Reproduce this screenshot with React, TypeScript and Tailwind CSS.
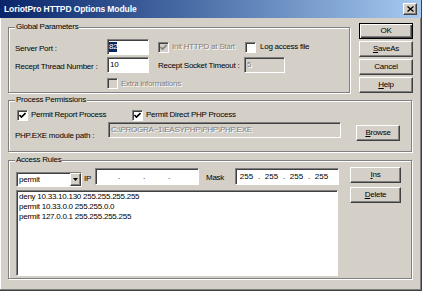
import React from "react";

const sunken =
  "border border-t-[#808080] border-l-[#808080] border-r-white border-b-white shadow-[inset_1px_1px_0_#404040]";
const raised =
  "border border-t-white border-l-white border-r-[#404040] border-b-[#404040] shadow-[inset_-1px_-1px_0_#808080]";
const etched = "relative border border-[#808080] shadow-[inset_1px_1px_0_#fff,1px_1px_0_#fff]";
const grayText = "text-[#808080] [text-shadow:1px_1px_0_#fff]";

function Check({ checked, disabled }: { checked?: boolean; disabled?: boolean }) {
  return (
    <span
      className={`w-[11px] h-[11px] shrink-0 flex items-center justify-center ${sunken} ${
        disabled ? "bg-[#d4d0c8]" : "bg-white"
      }`}
    >
      {checked && (
        <svg width="7" height="7" viewBox="0 0 7 7">
          <path d="M0.5 3 L2.5 5 L6.5 1" stroke={disabled ? "#808080" : "#000"} strokeWidth="1.6" fill="none" />
        </svg>
      )}
    </span>
  );
}

function Button({ label, u, w, def }: { label: string; u?: number; w: string; def?: boolean }) {
  const text =
    u === undefined ? (
      label
    ) : (
      <>
        {label.slice(0, u)}
        <span className="underline">{label[u]}</span>
        {label.slice(u + 1)}
      </>
    );
  return (
    <div
      className={`${w} h-[16px] shrink-0 flex items-center justify-center ${
        def
          ? "border border-black shadow-[inset_1px_1px_0_#fff,inset_-1px_-1px_0_#404040,inset_-2px_-2px_0_#808080]"
          : raised
      }`}
    >
      {text}
    </div>
  );
}

function Legend({ children }: { children: React.ReactNode }) {
  return (
    <span className="absolute -top-[6px] left-[6px] px-[1px] bg-[#d4d0c8] leading-[10px]">{children}</span>
  );
}

function IpBox({ values }: { values: string[] }) {
  return (
    <div className={`w-[104px] h-[17px] mt-[1px] bg-white flex items-center ${sunken}`}>
      {values.map((v, i) => (
        <React.Fragment key={i}>
          {i > 0 && <span className="w-[4px] text-center">.</span>}
          <span className="w-[21px] text-center tracking-normal">{v}</span>
        </React.Fragment>
      ))}
    </div>
  );
}

export default function App() {
  return (
    <div className="w-[422px] h-[291px] bg-[#d4d0c8] flex flex-col border-r border-b border-[#404040] shadow-[inset_-1px_-1px_0_#808080,inset_1px_0_0_#fff] [font-family:'Liberation_Sans',Arial,sans-serif] text-[8px] leading-[10px] tracking-[-0.25px] text-black">
      {/* title bar */}
      <div className="h-[18px] shrink-0 flex items-center justify-between bg-linear-to-r from-[#0a246a] to-[#a6caf0]">
        <span className="pl-[4px] text-white font-bold text-[8.5px] tracking-[-0.1px]">
          LoriotPro HTTPD Options Module
        </span>
        <span className={`w-[14px] h-[12px] mr-[4px] bg-[#d4d0c8] flex items-center justify-center ${raised}`}>
          <svg width="7" height="6" viewBox="0 0 7 6">
            <path d="M0.5 0.5 L6.5 5.5 M6.5 0.5 L0.5 5.5" stroke="#000" strokeWidth="1.4" />
          </svg>
        </span>
      </div>

      {/* global parameters + buttons */}
      <div className="flex mt-[5px]">
        <div className={`${etched} ml-[8px] mt-[4px] w-[342px] h-[66px] pt-[11px]`}>
          <Legend>Global Parameters</Legend>
          <div className="flex items-center h-[16px] pl-[6px]">
            <span className="w-[92px] mt-[3px]">Server Port :</span>
            <div className={`w-[42px] h-[16px] bg-white flex items-center pl-[1px] ${sunken}`}>
              <span className="bg-[#0a246a] text-white">82</span>
            </div>
            <div className="ml-[9px] w-[87px] flex items-center gap-[3px]">
              <Check checked disabled />
              <span className={grayText}>Init HTTPD at Start</span>
            </div>
            <div className="flex items-center gap-[4px]">
              <Check />
              <span>Log access file</span>
            </div>
          </div>
          <div className="flex items-center h-[16px] mt-[2px] pl-[6px]">
            <span className="w-[92px] mt-[3px]">Recept Thread Number :</span>
            <div className={`w-[42px] h-[16px] bg-white flex items-center pl-[2px] ${sunken}`}>10</div>
            <span className="ml-[9px] w-[86px] mt-[2px]">Recept Socket Timeout :</span>
            <div className={`w-[41px] h-[16px] bg-[#d4d0c8] flex items-center pl-[2px] ${sunken} ${grayText}`}>
              5
            </div>
          </div>
          <div className="flex items-center gap-[3px] mt-[5px] pl-[98px]">
            <Check disabled />
            <span className={grayText}>Extra informations</span>
          </div>
        </div>
        <div className="ml-[9px] flex flex-col gap-[2px]">
          <Button label="OK" w="w-[54px]" def />
          <Button label="SaveAs" u={0} w="w-[54px]" />
          <Button label="Cancel" w="w-[54px]" />
          <Button label="Help" u={0} w="w-[54px]" />
        </div>
      </div>

      {/* process permissions */}
      <div className={`${etched} ml-[8px] mt-[7px] w-[404px] h-[52px] pt-[8px]`}>
        <Legend>Process Permissions</Legend>
        <div className="flex items-center h-[12px] pl-[8px]">
          <div className="w-[115px] flex items-center gap-[3px]">
            <Check checked />
            <span>Permit Report Process</span>
          </div>
          <div className="flex items-center gap-[3px]">
            <Check checked />
            <span>Permit Direct PHP Process</span>
          </div>
        </div>
        <div className="flex items-start pl-[6px]">
          <span className="w-[93px] mt-[10px]">PHP.EXE module path :</span>
          <div className={`w-[233px] h-[16px] mt-[1px] bg-[#d4d0c8] flex items-center pl-[2px] ${sunken} ${grayText}`}>
            C:\PROGRA~1\EASYPHP\PHP\PHP.EXE
          </div>
          <div className="ml-[15px] mt-[4px]">
            <Button label="Browse" u={0} w="w-[44px]" />
          </div>
        </div>
      </div>

      {/* access rules */}
      <div className={`${etched} ml-[8px] mt-[8px] w-[404px] h-[119px] pt-[6px] flex`}>
        <Legend>Access Rules</Legend>
        <div className="pl-[7px] flex flex-col">
          <div className="flex items-start h-[20px]">
            <div className={`w-[66px] h-[15px] mt-[5px] bg-white flex items-center ${sunken}`}>
              <span className="flex-1 pl-[2px]">permit</span>
              <span className={`w-[11px] h-full bg-[#d4d0c8] flex items-center justify-center ${raised}`}>
                <svg width="5" height="3" viewBox="0 0 5 3">
                  <path d="M0 0 H5 L2.5 3 Z" fill="#000" />
                </svg>
              </span>
            </div>
            <span className="ml-[2px] w-[11px] mt-[7px]">IP</span>
            <IpBox values={["", "", "", ""]} />
            <span className="ml-[7px] w-[29px] mt-[6px]">Mask</span>
            <IpBox values={["255", "255", "255", "255"]} />
          </div>
          <div className={`w-[322px] h-[86px] mt-[3px] bg-white pl-[2px] pt-[1px] ${sunken}`}>
            <div>deny 10.33.10.130 255.255.255.255</div>
            <div>permit 10.33.0.0 255.255.0.0</div>
            <div>permit 127.0.0.1 255.255.255.255</div>
          </div>
        </div>
        <div className="ml-[11px] flex flex-col gap-[4px]">
          <Button label="Ins" u={0} w="w-[51px]" />
          <Button label="Delete" u={0} w="w-[51px]" />
        </div>
      </div>
    </div>
  );
}
